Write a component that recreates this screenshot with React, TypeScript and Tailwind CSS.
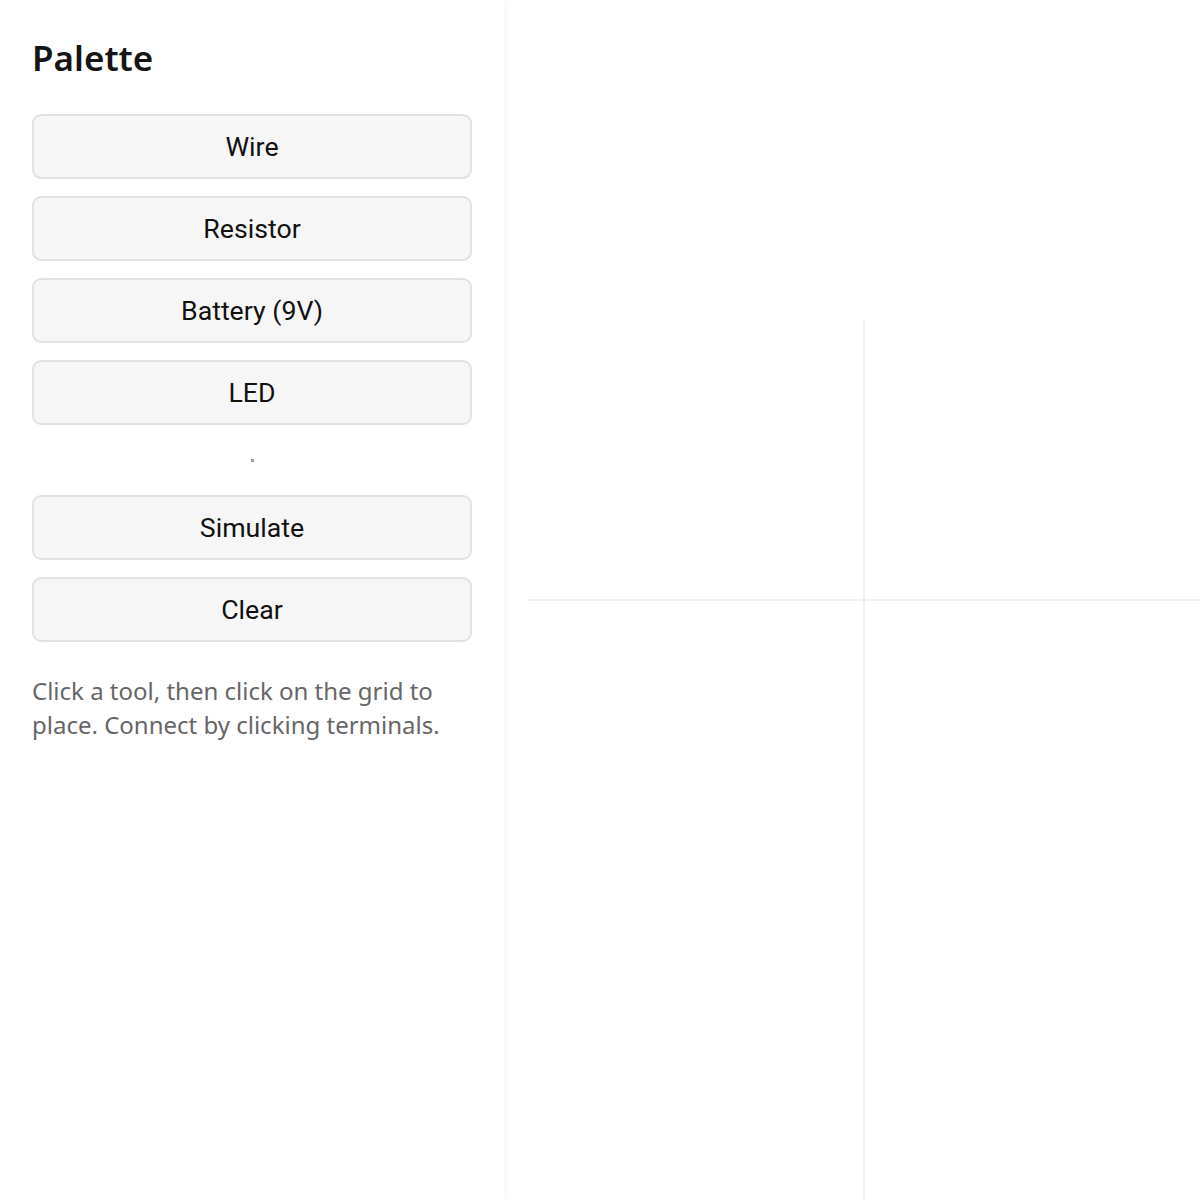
import React from 'react';

const tools = ['Wire', 'Resistor', 'Battery (9V)', 'LED'];
const actions = ['Simulate', 'Clear'];

function PaletteButton({ label }: { label: string }) {
  return (
    <button
      type="button"
      className="h-[65px] w-full rounded-[9px] border-2 border-[#e2e2e2] bg-[#f6f6f6] pt-[2px] text-[26.7px] text-[#111] [font-family:Roboto,'Liberation_Sans',sans-serif]"
    >
      {label}
    </button>
  );
}

export default function App() {
  return (
    <div className="flex h-[1200px] w-[1200px] overflow-hidden bg-white [font-family:'Noto_Sans','Open_Sans',sans-serif]">
      <aside className="relative z-10 flex w-[504px] shrink-0 flex-col bg-white px-[32px] pt-[28px] shadow-[3px_0_8px_rgba(0,0,0,0.04)]">
        <h1 className="text-[35px] font-semibold leading-[60px] text-[#151515]">Palette</h1>
        <div className="mt-[26px] flex w-[440px] flex-col gap-[17px]">
          {tools.map((t) => (
            <PaletteButton key={t} label={t} />
          ))}
        </div>
        <div className="flex h-[70px] w-[440px] items-center justify-center">
          <span className="h-[3px] w-[3px] bg-[#9a9a9a]" />
        </div>
        <div className="flex w-[440px] flex-col gap-[17px]">
          {actions.map((t) => (
            <PaletteButton key={t} label={t} />
          ))}
        </div>
        <p className="mt-[32px] w-[440px] text-[24px] leading-[34px] text-[#666]">
          Click a tool, then click on the grid to place. Connect by clicking terminals.
        </p>
      </aside>
      <main className="relative flex-1 bg-white">
        <svg className="h-full w-full" viewBox="0 0 696 1200" preserveAspectRatio="none">
          <line x1="360" y1="320" x2="360" y2="1200" stroke="#f1f1f1" strokeWidth="2" />
          <line x1="24" y1="600" x2="696" y2="600" stroke="#f1f1f1" strokeWidth="2" />
        </svg>
      </main>
    </div>
  );
}
